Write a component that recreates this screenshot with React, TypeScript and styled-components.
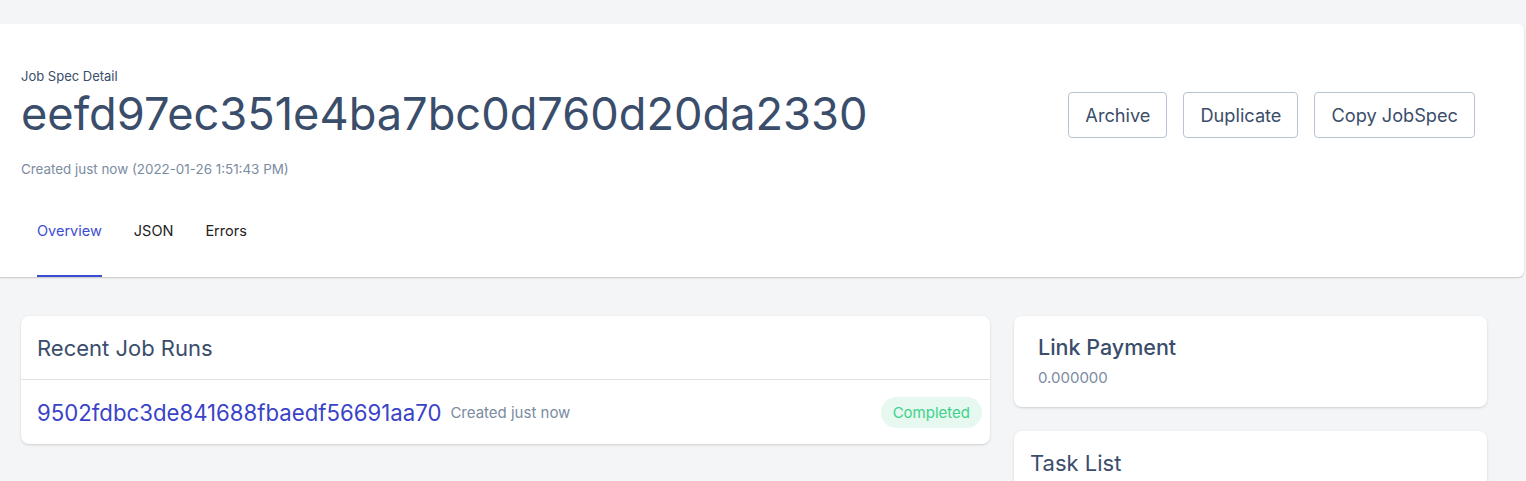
import React from "react";
import styled, { createGlobalStyle } from "styled-components";

const Global = createGlobalStyle`
  html, body { margin: 0; padding: 0; }
  body {
    background: #f4f5f7;
    font-family: Inter, "Noto Sans", sans-serif;
    color: #3a4d6b;
    -webkit-font-smoothing: antialiased;
    overflow: hidden;
  }
`;

const Page = styled.div`
  padding-top: 24px;
  height: 457px;
  overflow: hidden;
`;

const HeaderCard = styled.header`
  width: 1524px;
  background: #fff;
  border-radius: 0 6px 6px 0;
  box-shadow: 0 1px 2px rgba(0, 0, 0, 0.14), 0 1px 1px rgba(0, 0, 0, 0.06);
  padding-top: 42px;
`;

const TopRow = styled.div`
  display: flex;
  justify-content: space-between;
  align-items: flex-start;
  padding: 0 49px 0 21px;
`;

const TitleBlock = styled.div`
  display: flex;
  flex-direction: column;
`;

const Eyebrow = styled.div`
  font-size: 13px;
  line-height: 20px;
  color: #3a4d6b;
`;

const Title = styled.h1`
  margin: 0;
  font-size: 45.2px;
  font-weight: 400;
  line-height: 56px;
  color: #3a4d6b;
`;

const Created = styled.div`
  margin-top: 17px;
  font-size: 13.4px;
  line-height: 20px;
  color: #7b8ba1;
`;

const Actions = styled.div`
  display: flex;
  gap: 16px;
  margin-top: 26px;
`;

const OutlineButton = styled.button`
  height: 46px;
  padding: 0 16px;
  background: #fff;
  border: 1px solid #b8c4d2;
  border-radius: 4px;
  font-family: Inter, "Noto Sans", sans-serif;
  font-size: 18.2px;
  color: #3a4d6b;
`;

const Tabs = styled.nav`
  display: flex;
  padding-left: 21px;
  margin-top: 42px;
`;

const Tab = styled.div<{ $active?: boolean }>`
  margin: 0 16px;
  padding-bottom: 34px;
  font-size: 14.5px;
  line-height: 20px;
  color: ${(p) => (p.$active ? "#3c4cd2" : "#222")};
  border-bottom: 2px solid ${(p) => (p.$active ? "#3c4cd2" : "transparent")};
`;

const Main = styled.main`
  display: grid;
  grid-template-columns: 969px 473px;
  gap: 24px;
  padding: 39px 0 0 21px;
  align-items: start;
`;

const Column = styled.div`
  display: flex;
  flex-direction: column;
  gap: 24px;
`;

const Card = styled.section`
  background: #fff;
  border-radius: 8px;
  box-shadow: 0 1px 3px rgba(0, 0, 0, 0.12), 0 1px 1px rgba(0, 0, 0, 0.04);
  overflow: hidden;
`;

const CardHeader = styled.div`
  height: 63px;
  padding: 0 16px;
  display: flex;
  align-items: center;
  border-bottom: 1px solid #e0e0e0;
  font-size: 22px;
  color: #3a4d6b;
`;

const RunRow = styled.div`
  height: 64px;
  padding: 0 8px 0 16px;
  display: flex;
  align-items: center;
`;

const RunLink = styled.a`
  font-size: 22.2px;
  color: #3a43c8;
  text-decoration: none;
`;

const RunMeta = styled.span`
  margin-left: 9px;
  font-size: 15px;
  color: #7b8ba1;
  flex: 1;
`;

const Badge = styled.span`
  height: 31px;
  padding: 0 12px;
  display: inline-flex;
  align-items: center;
  border-radius: 16px;
  background: #e6f8ef;
  color: #3dd28a;
  font-size: 15px;
`;

const StatCard = styled(Card)`
  height: 91px;
  padding: 17px 24px 0;
  box-sizing: border-box;
`;

const StatTitle = styled.div`
  font-size: 21.5px;
  font-weight: 500;
  line-height: 28px;
  color: #3a4d6b;
`;

const StatValue = styled.div`
  font-size: 15px;
  line-height: 20px;
  color: #7b8ba1;
  margin-top: 7px;
`;

const ListCard = styled(Card)`
  height: 80px;
  padding: 18px 16px 0;
  box-sizing: border-box;
`;

const ListTitle = styled.div`
  font-size: 22px;
  line-height: 28px;
  color: #3a4d6b;
`;

export default function App() {
  return (
    <>
      <Global />
      <Page>
        <HeaderCard>
          <TopRow>
            <TitleBlock>
              <Eyebrow>Job Spec Detail</Eyebrow>
              <Title>eefd97ec351e4ba7bc0d760d20da2330</Title>
              <Created>Created just now (2022-01-26 1:51:43 PM)</Created>
            </TitleBlock>
            <Actions>
              <OutlineButton>Archive</OutlineButton>
              <OutlineButton>Duplicate</OutlineButton>
              <OutlineButton>Copy JobSpec</OutlineButton>
            </Actions>
          </TopRow>
          <Tabs>
            <Tab $active>Overview</Tab>
            <Tab>JSON</Tab>
            <Tab>Errors</Tab>
          </Tabs>
        </HeaderCard>
        <Main>
          <Card>
            <CardHeader>Recent Job Runs</CardHeader>
            <RunRow>
              <RunLink href="#">9502fdbc3de841688fbaedf56691aa70</RunLink>
              <RunMeta>Created just now</RunMeta>
              <Badge>Completed</Badge>
            </RunRow>
          </Card>
          <Column>
            <StatCard>
              <StatTitle>Link Payment</StatTitle>
              <StatValue>0.000000</StatValue>
            </StatCard>
            <ListCard>
              <ListTitle>Task List</ListTitle>
            </ListCard>
          </Column>
        </Main>
      </Page>
    </>
  );
}
